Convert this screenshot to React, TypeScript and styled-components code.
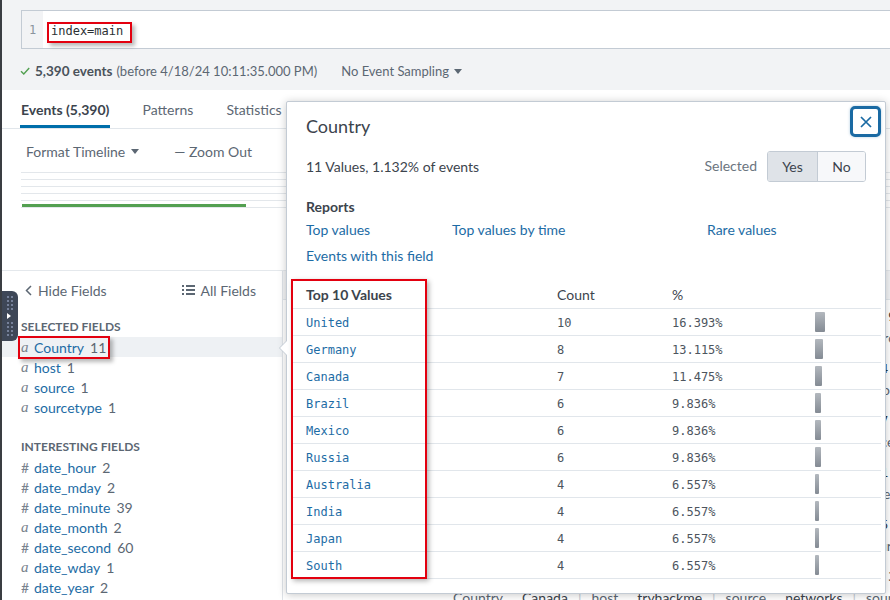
import React from "react";
import styled, { createGlobalStyle } from "styled-components";

const GlobalStyle = createGlobalStyle`
  html, body { margin: 0; padding: 0; }
  body {
    font-family: Lato, "Open Sans", "Liberation Sans", sans-serif;
    font-size: 14px;
    color: #3c444d;
    background: #fff;
  }
  *, *::before, *::after { box-sizing: border-box; }
`;

const BLUE = "#1d6ca5";
const GRAY = "#5c6773";
const DARK = "#3c444d";
const MONO = `"DejaVu Sans Mono", "Liberation Mono", monospace`;

const Page = styled.div`
  position: relative;
  width: 890px;
  height: 600px;
  overflow: hidden;
  border-left: 2px solid #3a3d42;
  display: flex;
  flex-direction: column;
  background: #fff;
`;

/* ---------- search area ---------- */
const SearchArea = styled.header`
  height: 90px;
  flex-shrink: 0;
  background: #f2f3f5;
  padding: 10px 0 0 19px;
`;
const SearchBox = styled.div`
  display: flex;
  height: 39px;
  background: #fff;
  border: 1px solid #c3cbd4;
  border-right: none;
`;
const Gutter = styled.div`
  width: 21px;
  background: #f2f3f5;
  color: #8b949e;
  font: 12px ${MONO};
  display: flex;
  align-items: center;
  justify-content: center;
`;
const Code = styled.div`
  flex: 1;
  padding: 13px 0 0 6px;
  font: 12px/14px ${MONO};
  color: #2b3033;
`;
const RedRing = styled.span`
  display: inline-flex;
  align-items: center;
  box-shadow: 0 0 0 2px #e3000f, 3px 3px 4px 2px rgba(0, 0, 0, 0.28);
`;
const QueryMark = styled(RedRing)`
  padding: 0 7px 3px 2px;
`;
const StatusRow = styled.div`
  display: flex;
  align-items: center;
  height: 20px;
  margin-top: 12px;
  margin-left: -1px;
  font-size: 13px;
  color: ${GRAY};
`;
const Check = styled.svg`
  margin-right: 5px;
`;
const Strong = styled.b`
  color: #4a525b;
  font-weight: 700;
  font-size: 13.5px;
  margin-right: 4px;
`;
const Sampling = styled.span`
  display: inline-flex;
  align-items: center;
  gap: 5px;
  margin-left: 24px;
`;

/* ---------- tabs ---------- */
const TabBar = styled.nav`
  display: flex;
  gap: 31px;
  height: 39px;
  flex-shrink: 0;
  padding-left: 18px;
  border-bottom: 1px solid #e1e6eb;
`;
const Tab = styled.div<{ $active?: boolean }>`
  display: flex;
  align-items: center;
  padding: 3px 1px 0;
  font-size: 14px;
  font-weight: ${(p) => (p.$active ? 700 : 400)};
  color: ${(p) => (p.$active ? DARK : GRAY)};
  border-bottom: 3px solid ${(p) => (p.$active ? "#006eaa" : "transparent")};
`;

/* ---------- timeline ---------- */
const TimelineArea = styled.section`
  height: 141px;
  flex-shrink: 0;
  padding: 10px 0 0 19px;
`;
const TimelineTools = styled.div`
  display: flex;
  align-items: center;
  height: 24px;
  padding-left: 5px;
  gap: 35px;
  color: ${GRAY};
  font-size: 14px;
`;
const ToolItem = styled.span`
  display: inline-flex;
  align-items: center;
  gap: 6px;
`;
const Chart = styled.div`
  margin-top: 9px;
  height: 36px;
  padding-top: 32px;
  background: repeating-linear-gradient(
    to bottom,
    #e3e7eb 0,
    #e3e7eb 1px,
    transparent 1px,
    transparent 7px
  );
`;
const VolumeBar = styled.div`
  margin-left: 1px;
  width: 224px;
  height: 3px;
  background: #53a051;
`;

/* ---------- lower split ---------- */
const Lower = styled.div`
  flex: 1;
  display: flex;
  border-top: 1px solid #e4e8ec;
  min-height: 0;
`;
const Sidebar = styled.aside`
  width: 281px;
  flex-shrink: 0;
  border-right: 1px solid #dfe3e8;
`;
const HideRow = styled.div`
  display: flex;
  align-items: center;
  justify-content: space-between;
  height: 38px;
  padding: 0 26px 0 23px;
  color: ${GRAY};
  font-size: 14px;
`;
const IconText = styled.span`
  display: inline-flex;
  align-items: center;
  gap: 6px;
`;
const SectionTitle = styled.div<{ $gap: number }>`
  margin-top: ${(p) => p.$gap}px;
  height: 21px;
  line-height: 21px;
  padding-left: 19px;
  font-size: 12px;
  font-weight: 700;
  color: ${GRAY};
  text-transform: uppercase;
`;
const FieldRow = styled.div<{ $selected?: boolean }>`
  display: flex;
  align-items: center;
  height: 20px;
  padding-left: 19px;
  background: ${(p) => (p.$selected ? "#eef1f4" : "transparent")};
  font-size: 14px;
`;
const FieldInner = styled.span`
  display: inline-flex;
  align-items: center;
  height: 19px;
`;
const FieldMark = styled(RedRing)`
  height: 19px;
  margin-left: -1px;
  padding: 0 2px 0 1px;
`;
const TypeGlyph = styled.span<{ $kind: string }>`
  width: 8px;
  color: #78828d;
  font-family: ${(p) =>
    p.$kind === "a" ? `"Liberation Serif", serif` : `Lato, sans-serif`};
  font-style: ${(p) => (p.$kind === "a" ? "italic" : "normal")};
  font-size: ${(p) => (p.$kind === "a" ? "15px" : "14px")};
`;
const FieldName = styled.span`
  color: ${BLUE};
  margin-left: 5px;
`;
const FieldCount = styled.span`
  color: ${GRAY};
  margin-left: 6px;
`;

const Handle = styled.div`
  position: absolute;
  left: -2px;
  top: 291px;
  width: 18px;
  height: 50px;
  background: #3e4757;
  border-radius: 0 6px 6px 0;
  display: flex;
  flex-direction: column;
  align-items: flex-start;
  padding: 5px 0 0 7px;
  gap: 3px;
`;
const Dots = styled.div`
  display: grid;
  grid-template-columns: 2px 2px;
  gap: 2px 2px;
  & > i {
    width: 2px;
    height: 2px;
    background: #76819a;
  }
`;
const PlayTri = styled.div`
  width: 0;
  height: 0;
  border-style: solid;
  border-width: 3px 0 3px 4px;
  border-color: transparent transparent transparent #fff;
`;

/* ---------- events panel (behind popup) ---------- */
const EventsPanel = styled.section`
  flex: 1;
  min-width: 0;
  overflow: hidden;
`;
const EventsHeader = styled.div`
  height: 29px;
  background: #f2f3f5;
  border-bottom: 1px solid #e1e6eb;
`;
const EventRow = styled.div`
  display: grid;
  grid-template-columns: 30px 120px 1fr;
  padding: 7px 0 5px;
  white-space: nowrap;
`;
const EventTime = styled.div`
  color: ${GRAY};
  font-size: 12px;
  line-height: 20px;
`;
const EventBody = styled.div`
  min-width: 0;
`;
const RawLine = styled.div`
  font: 12px/20px ${MONO};
  color: #2b3033;
`;
const FieldsLine = styled.div`
  display: flex;
  align-items: center;
  height: 20px;
  padding-left: 20px;
  font-size: 14px;
  color: ${GRAY};
`;
const KV = styled.span`
  display: inline-flex;
  gap: 19px;
  & > b {
    font-weight: 400;
    color: ${DARK};
  }
`;
const Sep = styled.span`
  margin: 0 10px;
  color: #c3cbd4;
`;

/* ---------- popup ---------- */
const Popup = styled.div`
  position: absolute;
  left: 284px;
  top: 101px;
  width: 600px;
  height: 493px;
  background: #fff;
  border: 1px solid #c3cbd4;
  border-radius: 2px;
  box-shadow: 0 1px 8px rgba(0, 0, 0, 0.22);
  display: flex;
  flex-direction: column;
  &::before,
  &::after {
    content: "";
    position: absolute;
    border-style: solid;
    border-color: transparent;
  }
  &::before {
    left: -8px;
    top: 238px;
    border-width: 8px 8px 8px 0;
    border-right-color: #c3cbd4;
  }
  &::after {
    left: -7px;
    top: 239px;
    border-width: 7px 7px 7px 0;
    border-right-color: #fff;
  }
`;
const PopupHeader = styled.div`
  display: flex;
  justify-content: space-between;
  align-items: flex-start;
  padding: 4px 4px 0 19px;
`;
const PopupTitle = styled.h2`
  margin: 9px 0 0;
  font-size: 18px;
  line-height: 22px;
  font-weight: 400;
  color: ${DARK};
`;
const CloseButton = styled.button`
  width: 31px;
  height: 31px;
  padding: 0;
  background: #fff;
  border: 3px solid #1a6aa3;
  border-radius: 5px;
  display: flex;
  align-items: center;
  justify-content: center;
  box-shadow: 0 0 3px rgba(26, 106, 163, 0.35);
`;
const ValuesRow = styled.div`
  display: flex;
  align-items: center;
  justify-content: space-between;
  margin-top: 14px;
  padding: 0 19px 0 19px;
  font-size: 14px;
`;
const ValuesText = styled.span`
  margin-top: -1px;
`;
const SelectedGroup = styled.div`
  display: flex;
  align-items: center;
  gap: 10px;
  color: #6b7580;
  & > span {
    margin-top: -3px;
  }
`;
const Toggle = styled.div`
  display: flex;
  height: 31px;
  border: 1px solid #c3cbd4;
  border-radius: 3px;
  overflow: hidden;
`;
const ToggleBtn = styled.div<{ $on?: boolean; $w: number }>`
  width: ${(p) => p.$w}px;
  display: flex;
  align-items: center;
  justify-content: center;
  background: ${(p) => (p.$on ? "#dfe3e8" : "#f7f8fa")};
  color: ${DARK};
  font-size: 14px;
  & + & {
    border-left: 1px solid #c3cbd4;
  }
`;
const ReportsLabel = styled.div`
  margin-top: 15px;
  padding-left: 19px;
  line-height: 20px;
  font-weight: 700;
  color: ${DARK};
`;
const LinksGrid = styled.div`
  display: grid;
  grid-template-columns: 146px 255px auto;
  row-gap: 6px;
  margin-top: 3px;
  padding-left: 19px;
`;
const Link = styled.a`
  line-height: 20px;
  color: ${BLUE};
  text-decoration: none;
`;
const TableWrap = styled.div`
  position: relative;
  margin: 17px 4px 0;
`;
const TRow = styled.div<{ $head?: boolean }>`
  display: grid;
  grid-template-columns: 266px 115px 143px 1fr;
  align-items: center;
  height: ${(p) => (p.$head ? 26 : 27)}px;
  padding-bottom: ${(p) => (p.$head ? 3 : 0)}px;
  border-bottom: 1px solid #e1e6eb;
`;
const HeadCell = styled.div<{ $bold?: boolean }>`
  font-size: 14px;
  font-weight: ${(p) => (p.$bold ? 700 : 400)};
  color: ${DARK};
  padding-left: ${(p) => (p.$bold ? 15 : 0)}px;
`;
const ValueCell = styled.div`
  padding: 1px 0 0 15px;
  font: 12px ${MONO};
  color: ${BLUE};
`;
const NumCell = styled.div`
  padding-top: 1px;
  font: 12px ${MONO};
  color: #4d555e;
`;
const BarCell = styled.div`
  display: flex;
  align-items: center;
`;
const Bar = styled.div`
  height: 20px;
  background: linear-gradient(to bottom, #b3b8be, #848b94);
  border-radius: 1px;
`;
const ColumnMark = styled.div`
  position: absolute;
  left: 0;
  top: -4px;
  width: 136px;
  height: 300px;
  border: 2px solid #e3000f;
  box-shadow: 2px 2px 5px rgba(0, 0, 0, 0.3);
  pointer-events: none;
`;

/* ---------- data ---------- */
type Field = { k: string; n: string; c: string; hl?: boolean };
const selectedFields: Field[] = [
  { k: "a", n: "Country", c: "11", hl: true },
  { k: "a", n: "host", c: "1" },
  { k: "a", n: "source", c: "1" },
  { k: "a", n: "sourcetype", c: "1" },
];
const interestingFields: Field[] = [
  { k: "#", n: "date_hour", c: "2" },
  { k: "#", n: "date_mday", c: "2" },
  { k: "#", n: "date_minute", c: "39" },
  { k: "a", n: "date_month", c: "2" },
  { k: "#", n: "date_second", c: "60" },
  { k: "a", n: "date_wday", c: "1" },
  { k: "#", n: "date_year", c: "2" },
];
const topValues: [string, number, number][] = [
  ["United", 10, 16.393],
  ["Germany", 8, 13.115],
  ["Canada", 7, 11.475],
  ["Brazil", 6, 9.836],
  ["Mexico", 6, 9.836],
  ["Russia", 6, 9.836],
  ["Australia", 4, 6.557],
  ["India", 4, 6.557],
  ["Japan", 4, 6.557],
  ["South", 4, 6.557],
];
const events = [
  { c: "United", raw: "2024-04-18 22:11:35 user=amorgan src=10.10.23.14 dest=172.16.4.9 action=allowed status=success" },
  { c: "Germany", raw: "2024-04-18 22:11:31 user=kfischer src=10.10.41.22 dest=172.16.4.2 action=allowed status=retry" },
  { c: "Brazil", raw: "2024-04-18 22:11:28 user=lsouza src=10.10.12.87 dest=172.16.4.7 action=blocked status=timeout" },
  { c: "India", raw: "2024-04-18 22:11:20 user=rkumar src=10.10.33.51 dest=172.16.4.1 action=allowed status=success" },
  { c: "Mexico", raw: "2024-04-18 22:11:12 user=jlopez src=10.10.18.40 dest=172.16.4.5 action=allowed status=escalated" },
  { c: "Canada", raw: "2024-04-18 22:11:05 user=ewilson src=10.10.27.63 dest=172.16.4.3 action=allowed status=success" },
];

const Caret = () => (
  <svg width="8" height="5" viewBox="0 0 8 5">
    <polygon points="0,0 8,0 4,5" fill="#5c6773" />
  </svg>
);

function FieldItem({ f }: { f: Field }) {
  const content = (
    <>
      <TypeGlyph $kind={f.k}>{f.k}</TypeGlyph>
      <FieldName>{f.n}</FieldName>
      <FieldCount>{f.c}</FieldCount>
    </>
  );
  return (
    <FieldRow $selected={f.hl}>
      {f.hl ? <FieldMark>{content}</FieldMark> : <FieldInner>{content}</FieldInner>}
    </FieldRow>
  );
}

export default function App() {
  return (
    <>
      <GlobalStyle />
      <Page>
        <SearchArea>
          <SearchBox>
            <Gutter>1</Gutter>
            <Code>
              <QueryMark>index=main</QueryMark>
            </Code>
          </SearchBox>
          <StatusRow>
            <Check width="10" height="8" viewBox="0 0 10 8">
              <path d="M1 4.2 L3.8 7 L9.2 1" stroke="#53a051" strokeWidth="1.4" fill="none" />
            </Check>
            <Strong>5,390 events</Strong>
            (before 4/18/24 10:11:35.000 PM)
            <Sampling>
              No Event Sampling <Caret />
            </Sampling>
          </StatusRow>
        </SearchArea>

        <TabBar>
          <Tab $active>Events (5,390)</Tab>
          <Tab>Patterns</Tab>
          <Tab>Statistics</Tab>
          <Tab>Visualization</Tab>
        </TabBar>

        <TimelineArea>
          <TimelineTools>
            <ToolItem>
              Format Timeline <Caret />
            </ToolItem>
            <ToolItem>— Zoom Out</ToolItem>
            <ToolItem>+ Zoom to Selection</ToolItem>
          </TimelineTools>
          <Chart>
            <VolumeBar />
          </Chart>
        </TimelineArea>

        <Lower>
          <Sidebar>
            <HideRow>
              <IconText>
                <svg width="7" height="11" viewBox="0 0 7 11">
                  <path d="M6 1 L1.5 5.5 L6 10" stroke="#5c6773" strokeWidth="1.5" fill="none" />
                </svg>
                Hide Fields
              </IconText>
              <IconText>
                <svg width="13" height="10" viewBox="0 0 13 10">
                  <g fill="#5c6773">
                    <rect x="0" y="0" width="2" height="2" />
                    <rect x="0" y="4" width="2" height="2" />
                    <rect x="0" y="8" width="2" height="2" />
                    <rect x="4" y="0" width="9" height="2" />
                    <rect x="4" y="4" width="9" height="2" />
                    <rect x="4" y="8" width="9" height="2" />
                  </g>
                </svg>
                All Fields
              </IconText>
            </HideRow>
            <SectionTitle $gap={7}>Selected Fields</SectionTitle>
            {selectedFields.map((f) => (
              <FieldItem key={f.n} f={f} />
            ))}
            <SectionTitle $gap={19}>Interesting Fields</SectionTitle>
            {interestingFields.map((f) => (
              <FieldItem key={f.n} f={f} />
            ))}
          </Sidebar>

          <EventsPanel>
            <EventsHeader />
            {events.map((e, i) => (
              <EventRow key={i}>
                <span />
                <EventTime>4/18/24 10:11:3{i} PM</EventTime>
                <EventBody>
                  <RawLine>{e.raw}</RawLine>
                  <FieldsLine>
                    <KV>
                      Country <b>{e.c}</b>
                    </KV>
                    <Sep>|</Sep>
                    <KV>
                      host <b>tryhackme</b>
                    </KV>
                    <Sep>|</Sep>
                    <KV>
                      source <b>networks</b>
                    </KV>
                    <Sep>|</Sep>
                    <KV>
                      sourcetype <b>network_logs</b>
                    </KV>
                  </FieldsLine>
                </EventBody>
              </EventRow>
            ))}
          </EventsPanel>
        </Lower>

        <Handle>
          <Dots>
            {Array.from({ length: 8 }).map((_, i) => (
              <i key={i} />
            ))}
          </Dots>
          <PlayTri />
          <Dots>
            {Array.from({ length: 8 }).map((_, i) => (
              <i key={i} />
            ))}
          </Dots>
        </Handle>

        <Popup>
          <PopupHeader>
            <PopupTitle>Country</PopupTitle>
            <CloseButton aria-label="Close">
              <svg width="12" height="12" viewBox="0 0 12 12">
                <path d="M1 1 L11 11 M11 1 L1 11" stroke="#1a6aa3" strokeWidth="1.7" fill="none" />
              </svg>
            </CloseButton>
          </PopupHeader>
          <ValuesRow>
            <ValuesText>11 Values, 1.132% of events</ValuesText>
            <SelectedGroup>
              <span>Selected</span>
              <Toggle>
                <ToggleBtn $on $w={49}>Yes</ToggleBtn>
                <ToggleBtn $w={48}>No</ToggleBtn>
              </Toggle>
            </SelectedGroup>
          </ValuesRow>
          <ReportsLabel>Reports</ReportsLabel>
          <LinksGrid>
            <Link>Top values</Link>
            <Link>Top values by time</Link>
            <Link>Rare values</Link>
            <Link>Events with this field</Link>
          </LinksGrid>
          <TableWrap>
            <TRow $head>
              <HeadCell $bold>Top 10 Values</HeadCell>
              <HeadCell>Count</HeadCell>
              <HeadCell>%</HeadCell>
              <span />
            </TRow>
            {topValues.map(([v, c, p]) => (
              <TRow key={v}>
                <ValueCell>{v}</ValueCell>
                <NumCell>{c}</NumCell>
                <NumCell>{p.toFixed(3)}%</NumCell>
                <BarCell>
                  <Bar style={{ width: `${Math.round((p / 16.393) * 10)}px` }} />
                </BarCell>
              </TRow>
            ))}
            <ColumnMark />
          </TableWrap>
        </Popup>
      </Page>
    </>
  );
}
